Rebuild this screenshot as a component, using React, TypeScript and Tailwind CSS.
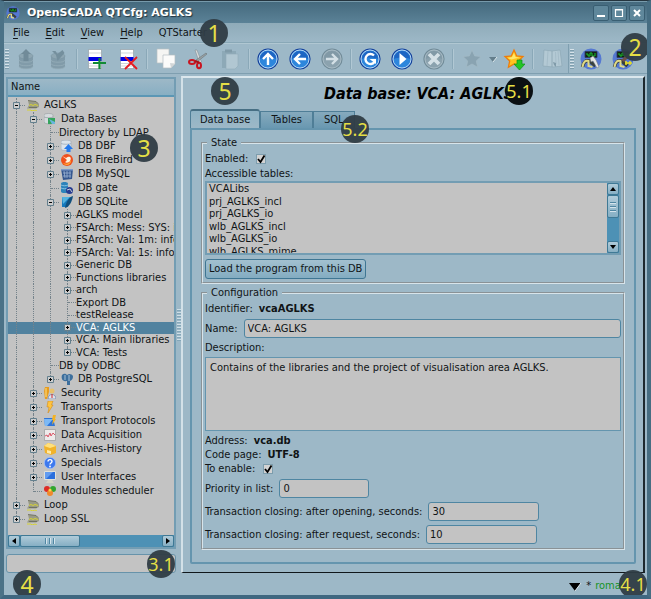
import { useState } from "react";
import type { ReactNode } from "react";
import clsx from "clsx";

/* ---------- Toolbar icons ---------- */

function Svg({ children, size = "h-[22px] w-[22px]" }: { children: ReactNode; size?: string }) {
  return (
    <svg viewBox="0 0 22 22" className={clsx(size, "shrink-0")} aria-hidden="true">
      {children}
    </svg>
  );
}

function DbIcon({ down }: { down?: boolean }) {
  return (
    <Svg>
      <path d="M4 8v10c0 4 14 4 14 0V8z" fill="#819ba9" />
      <path d="M4 12c0 3 14 3 14 0M4 15.500c0 3 14 3 14 0M4 18.500c0 3 14 3 14 0" fill="none" stroke="#95adb9" strokeWidth=".8" />
      <ellipse cx="11" cy="8" rx="7" ry="3" fill="#8ea6b2" stroke="#7b95a3" strokeWidth=".6" />
      {down ? (
        <path d="M5 3l4 4 1.500 6 7-8-2-3-5 4-2-3z" fill="#748f9d" />
      ) : (
        <path d="M11 1l5 5h-2.500v7h-5V6H6z" fill="#718b99" />
      )}
    </Svg>
  );
}

function RowIcon({ remove }: { remove?: boolean }) {
  return (
    <Svg>
      <path d="M3.500 1.500h13v19h-13z" fill="#fff" stroke="#8b959b" strokeWidth=".6" />
      <path d="M4 5h12M4 15.500h12M4 18h12" stroke="#bcc3c7" strokeWidth=".7" />
      <path d="M3.500 9h13v4h-13z" fill="#0000e0" />
      {remove ? (
        <path d="M8 9l12 12M20 9L8 21" stroke="#e51a20" strokeWidth="1.800" />
      ) : (
        <path d="M14.500 10v11M8 15h13" stroke="#128a35" strokeWidth="2.200" />
      )}
    </Svg>
  );
}

function CopyIcon() {
  return (
    <Svg>
      <path d="M2 1h12v10l-3 4H2z" fill="#f5f5f3" stroke="#b9c0c3" strokeWidth=".7" />
      <path d="M8 7h12v9l-4 4H8z" fill="#fbfbfa" stroke="#b5bdc1" strokeWidth=".7" />
      <path d="M20 15.500l-5-.5 1 5z" fill="#d2d6d7" />
    </Svg>
  );
}

function CutIcon() {
  return (
    <Svg>
      <path d="M8 2l2 0 4.500 12-2 1z" fill="#d9dcdd" stroke="#7b8588" strokeWidth=".5" />
      <path d="M20 6l-1-1-10 7 1 2z" fill="#9ba2a4" stroke="#5e686c" strokeWidth=".5" />
      <ellipse cx="5" cy="14" rx="3" ry="2" fill="none" stroke="#c91420" strokeWidth="2" />
      <ellipse cx="12" cy="17.500" rx="2" ry="2.800" fill="none" stroke="#c91420" strokeWidth="2" />
      <path d="M8 13l4 1.500" stroke="#a61119" strokeWidth="2" />
    </Svg>
  );
}

function PasteIcon() {
  return (
    <Svg>
      <path d="M3 3h14v17H3z" fill="#8da9b7" />
      <path d="M6 1.500h7v3H6z" fill="#809ba9" />
      <path d="M7 6h12v12l-3 3H7z" fill="#b1c7d2" stroke="#91abb8" strokeWidth=".6" />
    </Svg>
  );
}

type RoundKind = "up" | "back" | "forward" | "reload" | "play" | "stop";

function RoundIcon({ kind }: { kind: RoundKind }) {
  const dim = kind === "forward" || kind === "stop";
  return (
    <Svg>
      <circle cx="11" cy="11" r="10" fill={dim ? "#8ba2ae" : "#2d86dc"} stroke={dim ? "#718b98" : "#123f9a"} strokeWidth="1.200" />
      <circle cx="11" cy="11" r="9" fill="none" stroke={dim ? "#a9bcc6" : "#c4dcf3"} strokeWidth=".9" />
      <path d="M3 11a8 8 0 0116 0c-4-2-12-2-16 0z" fill={dim ? "#8199a6" : "#1d65c3"} />
      <g fill="none" stroke={dim ? "#d4e0e6" : "#fff"} strokeWidth="2.400">
        {kind === "up" && <path d="M11 17V6M6 11l5-5 5 5" />}
        {kind === "back" && <path d="M17 11H6M11 6l-5 5 5 5" />}
        {kind === "forward" && <path d="M5 11h11M11 6l5 5-5 5" />}
        {kind === "reload" && (
          <>
            <path d="M15 7.500A5 5 0 1015.500 14" />
            <path d="M10.500 11h6.500v5z" fill="#fff" stroke="none" />
          </>
        )}
        {kind === "play" && <path d="M8.500 5l7 6-7 6z" fill="#fff" stroke="none" />}
        {kind === "stop" && <path d="M6 6l10 10M16 6L6 16" strokeWidth="3.800" />}
      </g>
    </Svg>
  );
}

const STAR = "M11 2l2.700 5.900 6.300.7-4.700 4.300 1.300 6.300L11 16l-5.600 3.200 1.300-6.300L2 8.600l6.300-.7z";

function StarIcon({ add }: { add?: boolean }) {
  return (
    <Svg>
      {add ? (
        <>
          <path d={STAR} fill="#ffc41e" stroke="#ee7d0b" strokeWidth="1.300" />
          <path d="M11 5l1.500 4 4 .5-8 2-4-1.500 4.500-1z" fill="#ffe86e" />
          <path d="M14 12h5v4h3l-5.500 6L11 16h3z" fill="#22c525" stroke="#0b9417" strokeWidth=".7" />
        </>
      ) : (
        <path d={STAR} fill="#89a3b1" stroke="#a4bac5" strokeWidth=".7" />
      )}
    </Svg>
  );
}

function BookIcon() {
  return (
    <Svg>
      <path d="M3 2l8 1 8-1 2 16-9 1-10-1z" fill="#b3c9d4" stroke="#8aa4b1" strokeWidth=".6" />
      <path d="M11 3v16" stroke="#8da7b4" strokeWidth=".9" />
      <path d="M7 3L6 18M14.500 4l.5 12M17 3l1 14" stroke="#a1b9c5" strokeWidth=".8" />
      <path d="M12 14l3 1v4l-2-2z" fill="#809ba9" />
    </Svg>
  );
}

function ModuleIcon({ tool, size }: { tool?: "wrench" | "brush"; size?: string }) {
  return (
    <Svg size={size}>
      <circle cx="11" cy="11" r="10.500" fill="#5578d2" />
      <path d="M5 3.500h12v6H5z" fill="#142018" stroke="#2c3c57" strokeWidth=".8" />
      <path d="M6 6h2v2h2V5h2v3h3V5" fill="none" stroke="#18c32b" />
      <path d="M2.500 19c1-5 3-7 7-6l6 5" fill="none" stroke="#39413f" strokeWidth="3.400" />
      <path d="M2.500 19c1-6 3.500-7 6-6v5l4 1" fill="none" stroke="#dfd988" strokeWidth="2" />
      {tool === "wrench" && <path d="M10 10l3-2 3 4 3 7-2 1-4-7-2 1z" fill="#e3e4e3" stroke="#707578" strokeWidth=".5" />}
      {tool === "brush" && (
        <>
          <path d="M9 12l10-9 2 2-9 9z" fill="#705048" />
          <path d="M13 15h7M14 13v4M18 13v4" stroke="#e8df26" strokeWidth="1.500" />
        </>
      )}
    </Svg>
  );
}

/* ---------- Tree icons, drawn on a 12 x 12 grid ---------- */

const treeIcons: Record<string, ReactNode> = {
  station: (
    <>
      <path d="M1 1.500l8 1 3 2.500v3l-3 1.500H0L2 6z" fill="#9a9b86" />
      <path d="M1 1.500l8 1 2 2M2 8.500h8" fill="none" stroke="#66675a" strokeWidth=".8" />
      <path d="M2 6.500l2-1 2 1 2-1 3 1M0 11h4l1 1 3-1 2 1" fill="none" stroke="#d7d333" strokeWidth="1" />
    </>
  ),
  databases: (
    <>
      <path d="M0 2c0-2 9-2 9 0v8c0 2-9 1-9-1z" fill="#d5dadd" stroke="#949a9e" strokeWidth=".6" />
      <path d="M0 4c2 1 7 1 9 0" fill="none" stroke="#8f989d" strokeWidth=".7" />
      <path d="M4 5h7v6H4z" fill="#35a45c" />
      <path d="M5 6l6 3v2H8z" fill="#6bb5df" />
    </>
  ),
  dbf: (
    <>
      <path d="M0 1.500C0-.3 10-.3 10 1.500V9c0 2-10 2-10 0z" fill="#dce3eb" stroke="#9aa5b3" strokeWidth=".6" />
      <path d="M0 3.500c2 1 8 1 10 0" fill="none" stroke="#93a3b5" strokeWidth=".7" />
      <path d="M7.500 4l4.500 5H9.500v3h-4V9H3z" fill="#2479ec" />
    </>
  ),
  firebird: (
    <>
      <circle cx="6" cy="6" r="6" fill="#f0501c" />
      <path d="M1 2l4 2c4-3 6 0 4 3-1 2-4 2-5 1 2-1 2-2 1-3z" fill="#fff2de" />
      <path d="M2 9c4 2 7 0 8-3 1 4-5 7-8 3z" fill="#ffad38" />
    </>
  ),
  mysql: (
    <>
      <path d="M0 1h12l-1 10-9 1z" fill="#35578f" />
      <path d="M3 3l1 7M6 3v7M9 3v7M2 5h8M2 8h8" stroke="#a9bedc" strokeWidth=".7" />
      <path d="M0 1h12v1.500H0z" fill="#7d9acb" />
    </>
  ),
  gate: (
    <>
      <path d="M0 1.500c0-2 7-2 7 0v8c0 2-7 2-7 0z" fill="#2e83ba" />
      <path d="M0 3c2 1 5 1 7 0M0 6c2 1 5 1 7 0" fill="none" stroke="#9fd0eb" strokeWidth=".8" />
      <circle cx="8.500" cy="8.500" r="3.500" fill="#273c91" />
      <path d="M6 8l3-1 2 3" fill="none" stroke="#c7ced4" />
    </>
  ),
  sqlite: (
    <>
      <path d="M1 1h9L7 11H1z" fill="#1479bd" />
      <path d="M1 1h8L2 8z" fill="#55b3df" />
      <path d="M12 0C8 1 5 6 4 12c4-1 7-6 8-12z" fill="#104f7d" />
    </>
  ),
  postgres: (
    <>
      <path d="M1 2c2-2 4-1 5 0 2-2 5-1 6 1 0 3-1 4-3 5v4H6V8C1 9 0 5 1 2z" fill="#3d6f9d" />
      <path d="M4 2v5M8 2v6" stroke="#c5d7e6" strokeWidth=".8" />
    </>
  ),
  security: (
    <>
      <path d="M1 0h4v5L3 12H1L0 4z" fill="#e79c20" />
      <path d="M2 1v9" stroke="#ffe182" />
      <circle cx="8" cy="4" r="2.500" fill="#e8c16c" />
      <path d="M4 12c0-6 8-6 8 0z" fill="#dfe4ec" stroke="#6d7fa5" strokeWidth=".7" />
      <path d="M8 7v4" stroke="#d52525" />
    </>
  ),
  transports: <path d="M4 0h5L7.500 4H9L4 12l1-6H3z" fill="#ffc43f" stroke="#d18b1e" strokeWidth=".6" />,
  protocols: (
    <>
      <path d="M0 3h9l2 8H1z" fill="#2e74d8" />
      <path d="M0 4h9l-6 7H1z" fill="#7cb9f5" />
      <path d="M9 0h3l-1 4h1L8 10l1-5H8z" fill="#f4b224" />
    </>
  ),
  daq: (
    <>
      <path d="M.5.500h11v11H.5z" fill="#eeeaea" stroke="#9f9f9f" strokeWidth=".8" />
      <path d="M1 7l2-1 1 2 2-4 1 3 2-3 2 2" fill="none" stroke="#d8485b" strokeWidth=".9" />
    </>
  ),
  archives: (
    <>
      <path d="M0 3l4-3 4 1 4 2v7l-5 2-6-2z" fill="#f1b32b" />
      <path d="M0 3l6 2 6-2-4-2-4-1z" fill="#ffe07d" />
      <path d="M3 7l4 1v3l-4-1z" fill="#ffeaa9" />
    </>
  ),
  specials: (
    <>
      <circle cx="6" cy="6" r="5.700" fill="#3d79ee" stroke="#a7c5f9" strokeWidth=".7" />
      <path d="M4 4.500C4 2 8 2 8 4.500 8 6 6 6 6 7.500" fill="none" stroke="#fff" strokeWidth="1.400" />
      <circle cx="6" cy="9.500" r=".9" fill="#fff" />
    </>
  ),
  ui: (
    <>
      <path d="M.5.500h11v8H.5z" fill="#2b6fdd" stroke="#e1e1da" />
      <path d="M1 1h8L2 8H1z" fill="#639cf0" />
      <path d="M4 9h4l2 3H2z" fill="#d6d3c5" />
    </>
  ),
  modules: (
    <>
      <circle cx="3" cy="4" r="3" fill="#dc2c26" />
      <circle cx="9" cy="4" r="3" fill="#32a52f" />
      <circle cx="6" cy="8" r="3" fill="#f0892c" />
      <circle cx="6" cy="5" r="1.500" fill="#f5d94d" />
    </>
  ),
};

/* ---------- Tree ---------- */

type Node = {
  label: string;
  depth: number;
  icon?: string;
  state?: "open" | "closed";
  guides: boolean[];
  last?: boolean;
};

const top: Node[] = [
  { label: "AGLKS", depth: 0, icon: "station", state: "open", guides: [] },
  { label: "Data Bases", depth: 1, icon: "databases", state: "open", guides: [true] },
  { label: "Directory by LDAP", depth: 2, guides: [true, true] },
  { label: "DB DBF", depth: 2, icon: "dbf", state: "closed", guides: [true, true] },
  { label: "DB FireBird", depth: 2, icon: "firebird", state: "closed", guides: [true, true] },
  { label: "DB MySQL", depth: 2, icon: "mysql", state: "closed", guides: [true, true] },
  { label: "DB gate", depth: 2, icon: "gate", guides: [true, true] },
  { label: "DB SQLite", depth: 2, icon: "sqlite", state: "open", guides: [true, true] },
];

const deep = [true, true, true];
const sqlite: Node[] = [
  { label: "AGLKS model", depth: 3, state: "closed", guides: deep },
  { label: "FSArch: Mess: SYS: info", depth: 3, state: "closed", guides: deep },
  { label: "FSArch: Val: 1m: info", depth: 3, state: "closed", guides: deep },
  { label: "FSArch: Val: 1s: info", depth: 3, state: "closed", guides: deep },
  { label: "Generic DB", depth: 3, state: "closed", guides: deep },
  { label: "Functions libraries", depth: 3, state: "closed", guides: deep },
  { label: "arch", depth: 3, state: "closed", guides: deep },
  { label: "Export DB", depth: 3, guides: deep },
  { label: "testRelease", depth: 3, guides: deep },
  { label: "VCA: AGLKS", depth: 3, state: "closed", guides: deep },
  { label: "VCA: Main libraries", depth: 3, state: "closed", guides: deep },
  { label: "VCA: Tests", depth: 3, state: "closed", guides: deep, last: true },
];

const bottom: Node[] = [
  { label: "DB by ODBC", depth: 2, guides: [true, true] },
  { label: "DB PostgreSQL", depth: 2, icon: "postgres", state: "closed", guides: [true, true], last: true },
  { label: "Security", depth: 1, icon: "security", state: "closed", guides: [true] },
  { label: "Transports", depth: 1, icon: "transports", state: "closed", guides: [true] },
  { label: "Transport Protocols", depth: 1, icon: "protocols", state: "closed", guides: [true] },
  { label: "Data Acquisition", depth: 1, icon: "daq", state: "closed", guides: [true] },
  { label: "Archives-History", depth: 1, icon: "archives", state: "closed", guides: [true] },
  { label: "Specials", depth: 1, icon: "specials", state: "closed", guides: [true] },
  { label: "User Interfaces", depth: 1, icon: "ui", state: "closed", guides: [true] },
  { label: "Modules scheduler", depth: 1, icon: "modules", guides: [true], last: true },
  { label: "Loop", depth: 0, icon: "station", state: "closed", guides: [] },
  { label: "Loop SSL", depth: 0, icon: "station", state: "closed", guides: [], last: true },
];

function Branch({ state, last }: { state?: "open" | "closed"; last?: boolean }) {
  return (
    <span className="grid w-[17px] shrink-0 grid-cols-2 self-stretch">
      <span className={clsx("col-start-1 row-start-1 border-r border-dotted border-[#75838b]", last && "mb-[6px]")} />
      <span className="col-start-2 row-start-1 h-px self-center border-t border-dotted border-[#75838b]" />
      {state && (
        <svg viewBox="0 0 7 7" className="z-10 col-span-2 col-start-1 row-start-1 h-[7px] w-[7px] place-self-center" aria-hidden="true">
          <path d="M.5.500h6v6h-6z" fill="#cdcdcd" stroke="#637f8d" />
          <path d={state === "open" ? "M2 3.500h3" : "M2 3.500h3M3.500 2v3"} stroke="#000" />
        </svg>
      )}
    </span>
  );
}

type RowProps = { node: Node; selected: boolean; onSelect: (label: string) => void };

function TreeRow({ node, selected, onSelect }: RowProps) {
  return (
    <li
      role="treeitem"
      aria-level={node.depth + 1}
      aria-selected={selected}
      onClick={() => onSelect(node.label)}
      className={clsx(
        "flex min-w-0 cursor-default items-center whitespace-nowrap leading-3",
        node.depth < 3 && (node.icon ? "h-[14px]" : "h-[13px]"),
        selected && "bg-[#51829f] text-white"
      )}>
      {node.guides.map((on, i) => (
        <span key={i} className="grid w-[17px] shrink-0 grid-cols-2 self-stretch">
          {on && <span className="border-r border-dotted border-[#75838b]" />}
        </span>
      ))}
      <Branch state={node.state} last={node.last} />
      {node.icon && (
        <svg viewBox="0 0 12 12" className="mr-[5px] ml-0.5 h-3 w-3 shrink-0" aria-hidden="true">
          {treeIcons[node.icon]}
        </svg>
      )}
      <span>{node.label}</span>
    </li>
  );
}

/* ---------- Small parts ---------- */

function ToolButton({ label, children, disabled }: { label: string; children: ReactNode; disabled?: boolean }) {
  return (
    <button type="button" aria-label={label} disabled={disabled} className="flex w-8 shrink-0 items-center justify-center">
      {children}
    </button>
  );
}

function Separator() {
  return (
    <span className="flex h-5 w-1.5 shrink-0 justify-center">
      <span className="w-px bg-[#8aa8b8]" />
      <span className="w-px bg-[#b1c8d4]" />
    </span>
  );
}

function Grip() {
  return (
    <span className="flex w-1.5 shrink-0 flex-col items-center gap-px">
      {[0, 1, 2, 3, 4, 5, 6].map((i) => (
        <span key={i} className="h-0.5 w-1 border-t border-[#d5e2e9] bg-[#7d9dad]" />
      ))}
    </span>
  );
}

function Check({ id }: { id: string }) {
  return (
    <span className="grid">
      <input
        id={id}
        type="checkbox"
        defaultChecked
        className="peer col-start-1 row-start-1 h-[10px] w-[10px] appearance-none border border-[#7d9dad] bg-[#d3d3d3]"
      />
      <svg
        viewBox="0 0 10 10"
        className="pointer-events-none invisible col-start-1 row-start-1 h-[10px] w-[10px] peer-checked:visible"
        aria-hidden="true">
        <path d="M2 5l2.500 3L8.500 1.500" fill="none" stroke="#000" strokeWidth="1.800" />
      </svg>
    </span>
  );
}

function Field({ id, label, value, width }: { id: string; label: string; value: string; width: string }) {
  return (
    <div className="flex items-center gap-1.5">
      <label htmlFor={id} className="shrink-0">
        {label}
      </label>
      <input
        id={id}
        type="text"
        defaultValue={value}
        className={clsx("h-[19px] min-w-0 rounded-[3px] border border-[#4f86a2] bg-[#c3c3c3] px-[3px] outline-none", width)}
      />
    </div>
  );
}

function Info({ label, value }: { label: string; value: string }) {
  return (
    <p className="flex gap-1.5">
      <span>{label}</span>
      <b>{value}</b>
    </p>
  );
}

function Badge({ text, place }: { text: string; place: string }) {
  return (
    <span
      className={clsx(
        "pointer-events-none absolute z-20 flex h-7 w-7 items-center justify-center rounded-full font-['Noto_Sans',sans-serif] text-[#e5df46]",
        text.length > 1 ? "text-[18px]" : "text-[23px]",
        text === "5.1" ? "bg-[#0b1013]" : "bg-[#2f3c44]/95",
        place
      )}>
      {text}
    </span>
  );
}

const legendClass = "ml-0.5 px-1 leading-[14px]";
const groupClass = "min-w-0 border-2 border-[#d8e4ea] px-0.5 [border-style:groove]";
const scrollButton =
  "flex shrink-0 items-center justify-center rounded-[2px] border border-[#3f7995] bg-linear-to-b from-[#b0cbd9] to-[#86afc4]";

const menus = ["File", "Edit", "View", "Help"];
const tables = ["VCALibs", "prj_AGLKS_incl", "prj_AGLKS_io", "wlb_AGLKS_incl", "wlb_AGLKS_io", "wlb_AGLKS_mime"];
const tabs = ["Data base", "Tables", "SQL"];

export default function App() {
  const [selected, setSelected] = useState("VCA: AGLKS");
  const [tab, setTab] = useState("Data base");

  const row = (node: Node) => (
    <TreeRow key={node.label} node={node} selected={node.label === selected} onSelect={setSelected} />
  );

  return (
    <div className="relative flex min-h-screen flex-col overflow-hidden border-x-4 border-t border-b-4 border-t-[#24343e] border-r-[#466d82] border-b-[#3f6780] border-l-[#4b7287] bg-[#9db8c7] font-['DejaVu_Sans_Condensed','DejaVu_Sans',sans-serif] text-[11px] leading-[14px] text-[#101416]">
      {/* Title bar */}
      <header className="flex h-[22px] items-center gap-[7px] border-t border-[#779aab] bg-linear-to-b from-[#456a7e] to-[#5b8297] px-0.5">
        <ModuleIcon size="h-[14px] w-[14px]" />
        <h1 className="flex-1 font-['DejaVu_Sans',sans-serif] text-[11px] font-bold text-white [text-shadow:1px_1px_1px_#22343e]">
          OpenSCADA QTCfg: AGLKS
        </h1>
        <div className="flex gap-0.5">
          {["Minimize", "Maximize", "Close"].map((name) => (
            <button
              key={name}
              type="button"
              aria-label={name}
              className="flex h-4 w-4 items-center justify-center rounded-[2px] border border-[#395e72] bg-[#5f879b]">
              <svg viewBox="0 0 10 10" className="h-[10px] w-[10px]" fill="none" stroke="#fff" aria-hidden="true">
                {name === "Minimize" && <path d="M1 8h8" strokeWidth="2" />}
                {name === "Maximize" && <path d="M1.500 1.500h7v7h-7zM1 2h8" strokeWidth="1.200" />}
                {name === "Close" && <path d="M2 2l6 6M8 2L2 8" strokeWidth="2" />}
              </svg>
            </button>
          ))}
        </div>
      </header>

      {/* Menu */}
      <nav className="flex h-5 items-center gap-4 border-b border-[#89a8b7] bg-linear-to-b from-[#8fabb9] to-[#9db8c7] px-[9px]">
        {menus.map((m) => (
          <button key={m} type="button">
            <span className="underline underline-offset-2">{m[0]}</span>
            {m.slice(1)}
          </button>
        ))}
        <button type="button">QTStarter</button>
      </nav>

      {/* Toolbar */}
      <div className="flex h-[31px] items-stretch border-t border-b border-t-[#b0c7d2] border-b-[#7f9fb0]">
        <div className="flex items-center">
          <Grip />
          <ToolButton label="Load" disabled><DbIcon /></ToolButton>
          <ToolButton label="Save" disabled><DbIcon down /></ToolButton>
          <Separator />
          <ToolButton label="Add item"><RowIcon /></ToolButton>
          <ToolButton label="Delete item"><RowIcon remove /></ToolButton>
          <Separator />
          <ToolButton label="Copy"><CopyIcon /></ToolButton>
          <ToolButton label="Cut"><CutIcon /></ToolButton>
          <ToolButton label="Paste" disabled><PasteIcon /></ToolButton>
          <Separator />
          <ToolButton label="Up"><RoundIcon kind="up" /></ToolButton>
          <ToolButton label="Previous"><RoundIcon kind="back" /></ToolButton>
          <ToolButton label="Next" disabled><RoundIcon kind="forward" /></ToolButton>
          <Separator />
          <ToolButton label="Refresh"><RoundIcon kind="reload" /></ToolButton>
          <ToolButton label="Start"><RoundIcon kind="play" /></ToolButton>
          <ToolButton label="Stop" disabled><RoundIcon kind="stop" /></ToolButton>
          <Separator />
          <ToolButton label="Favorites" disabled><StarIcon /></ToolButton>
          <button type="button" aria-label="Favorites list" className="w-2.5 shrink-0">
            <svg viewBox="0 0 10 6" className="h-1.5 w-2.5" aria-hidden="true">
              <path d="M1 1h8L5 6z" fill="#647e8c" />
              <path d="M9 1L5 6" stroke="#dce7ec" />
            </svg>
          </button>
          <ToolButton label="Add to favorites"><StarIcon add /></ToolButton>
          <Separator />
          <ToolButton label="Manual" disabled><BookIcon /></ToolButton>
        </div>
        <div className="flex flex-1 items-center border-l border-[#7f9fb0]">
          <Grip />
          <ToolButton label="Configurator"><ModuleIcon tool="wrench" /></ToolButton>
          <ToolButton label="Development"><ModuleIcon tool="brush" /></ToolButton>
        </div>
      </div>

      <div className="flex flex-1 pt-0.5">
        {/* Navigation */}
        <aside className="flex w-[172px] shrink-0 flex-col gap-[5px] pt-px pl-0.5">
          <div className="flex flex-1 flex-col border-2 border-[#739db3] bg-[#c3c3c3]">
            <div className="flex h-[18px] items-center border-b-2 border-[#5b97b5] bg-linear-to-b from-[#9db8c7] to-[#88afc3] px-[3px]">
              Name
            </div>
            <ul role="tree" aria-label="Name" className="flex flex-1 flex-col overflow-hidden pt-px">
              {top.map(row)}
              <li role="none">
                <ul role="group" className="grid h-[150px] auto-rows-fr">{sqlite.map(row)}</ul>
              </li>
              {bottom.map(row)}
            </ul>
            <div className="flex h-3 bg-[#4d91b5]">
              <button type="button" aria-label="Scroll left" className={clsx(scrollButton, "w-3")}>
                <svg viewBox="0 0 6 6" className="h-1.5 w-1.5" aria-hidden="true"><path d="M5 0v6L1 3z" /></svg>
              </button>
              <span className={clsx(scrollButton, "w-[60px] gap-0.5")}>
                {[0, 1, 2].map((i) => (
                  <span key={i} className="h-1.5 w-0.5 border-l border-[#4f86a2] bg-[#d5e4ec]" />
                ))}
              </span>
              <button type="button" aria-label="Scroll right" className={clsx(scrollButton, "ml-auto w-3")}>
                <svg viewBox="0 0 6 6" className="h-1.5 w-1.5" aria-hidden="true"><path d="M1 0v6l4-3z" /></svg>
              </button>
            </div>
          </div>
          <input
            type="text"
            aria-label="Search"
            className="h-[19px] w-full rounded-[3px] border border-[#6793aa] bg-[#c3c3c3] px-1 outline-none"
          />
        </aside>

        {/* Splitter */}
        <div className="flex w-[5px] shrink-0 flex-col items-center justify-center gap-px">
          {Array.from({ length: 11 }, (_, i) => (
            <span key={i} className="h-0.5 w-1 border-t border-[#cfdfe7] bg-[#84a7b9]" />
          ))}
        </div>

        {/* Page */}
        <main className="mr-0.5 flex min-w-0 flex-1 flex-col border-t-2 border-r-2 border-b border-l-2 border-t-[#dbe7ed] border-r-[#1d282e] border-b-[#10171b] border-l-[#d3e1e8] px-[7px] pb-2">
          <h2 className="flex h-[31px] items-center justify-center pl-3 text-[16px] font-bold text-black italic">
            Data base: VCA: AGLKS
          </h2>
          <div role="tablist" className="flex h-[19px] items-end">
            {tabs.map((t) => (
              <button
                key={t}
                type="button"
                role="tab"
                aria-selected={tab === t}
                onClick={() => setTab(t)}
                className={clsx(
                  "border-x border-[#4f7e97]",
                  t === "Data base" ? "px-[9px]" : "px-2.5",
                  tab === t
                    ? "h-[19px] rounded-t-[3px] border-t-2 border-t-[#476f84] bg-linear-to-b from-[#8fb3c5] to-[#9db8c7]"
                    : "h-[17px] border-t bg-linear-to-b from-[#86aabd] to-[#6998b1]"
                )}>
                {t}
              </button>
            ))}
          </div>
          <div role="tabpanel" aria-label={tab} className="flex flex-1 flex-col gap-0.5 rounded-b-[2px] border-2 border-[#6595ae] px-[9px] pt-1.5 pb-3">
            <fieldset className={clsx(groupClass, "pb-[3px]")}>
              <legend className={legendClass}>State</legend>
              <div className="flex h-[17px] items-center gap-2">
                <label htmlFor="enabled">Enabled:</label>
                <Check id="enabled" />
              </div>
              <p id="tables-label">Accessible tables:</p>
              <div className="flex h-[74px] border-2 border-[#739db3] bg-[#c3c3c3]">
                <div className="min-w-0 flex-1 overflow-hidden">
                  <ul aria-labelledby="tables-label" className="grid h-[75px] auto-rows-fr px-0.5 leading-3">
                    {tables.map((t) => (
                      <li key={t}>{t}</li>
                    ))}
                  </ul>
                </div>
                <div className="flex w-3 flex-col bg-[#4d91b5]">
                  <button type="button" aria-label="Scroll up" className={clsx(scrollButton, "h-3")}>
                    <svg viewBox="0 0 6 4" className="h-1 w-1.5" aria-hidden="true"><path d="M0 4h6L3 0z" /></svg>
                  </button>
                  <span className={clsx(scrollButton, "h-[23px] flex-col gap-0.5")}>
                    {[0, 1, 2].map((i) => (
                      <span key={i} className="h-0.5 w-1.5 border-t border-[#4f86a2] bg-[#d5e4ec]" />
                    ))}
                  </span>
                  <button type="button" aria-label="Scroll down" className={clsx(scrollButton, "mt-auto h-3")}>
                    <svg viewBox="0 0 6 4" className="h-1 w-1.5" aria-hidden="true"><path d="M0 0h6L3 4z" /></svg>
                  </button>
                </div>
              </div>
              <button
                type="button"
                className="mt-1 h-5 rounded-[3px] border border-[#3f7693] bg-linear-to-b from-[#a3c1d0] to-[#83acc1] px-[3px]">
                Load the program from this DB
              </button>
            </fieldset>

            <fieldset className={clsx(groupClass, "pb-1")}>
              <legend className={legendClass}>Configuration</legend>
              <div className="flex flex-col gap-[3px] pt-0.5">
                <Info label="Identifier:" value="vcaAGLKS" />
                <Field id="name" label="Name:" value="VCA: AGLKS" width="flex-1" />
                <div className="flex flex-col gap-0.5">
                  <label htmlFor="description">Description:</label>
                  <textarea
                    id="description"
                    defaultValue="Contains of the libraries and the project of visualisation area AGLKS."
                    className="block h-[74px] w-full resize-none border border-[#6495ae] bg-[#c3c3c3] px-1 py-[3px] outline-none"
                  />
                </div>
                <div className="flex flex-col">
                  <Info label="Address:" value="vca.db" />
                  <Info label="Code page:" value="UTF-8" />
                  <div className="flex items-center gap-2">
                    <label htmlFor="to-enable">To enable:</label>
                    <Check id="to-enable" />
                  </div>
                </div>
                <div className="flex flex-col gap-1">
                  <Field id="priority" label="Priority in list:" value="0" width="w-[90px]" />
                  <Field id="opening" label="Transaction closing: after opening, seconds:" value="30" width="w-[111px]" />
                  <Field id="request" label="Transaction closing: after request, seconds:" value="10" width="w-[111px]" />
                </div>
              </div>
            </fieldset>
          </div>
        </main>
      </div>

      {/* Status bar */}
      <footer className="flex h-[22px] items-center justify-end gap-1 pt-1 pr-5">
        <svg viewBox="0 0 14 9" className="h-[9px] w-3.5" aria-hidden="true">
          <path d="M1 1h12L7 9z" />
          <path d="M13 1L7 9" stroke="#e5edf1" />
        </svg>
        <span>*</span>
        <span className="text-[#169327]">roman</span>
      </footer>

      <Badge text="1" place="left-[196px] top-[18px]" />
      <Badge text="2" place="right-[-2px] top-[32px]" />
      <Badge text="3" place="left-[126px] top-[133px]" />
      <Badge text="3.1" place="left-[143px] bottom-[17px]" />
      <Badge text="4" place="left-[9px] bottom-[-3px]" />
      <Badge text="5" place="left-[207px] top-[76px]" />
      <Badge text="5.1" place="right-[114px] top-[76px]" />
      <Badge text="5.2" place="left-[337px] top-[114px]" />
      <Badge text="4.1" place="right-0 bottom-[-3px]" />
    </div>
  );
}
